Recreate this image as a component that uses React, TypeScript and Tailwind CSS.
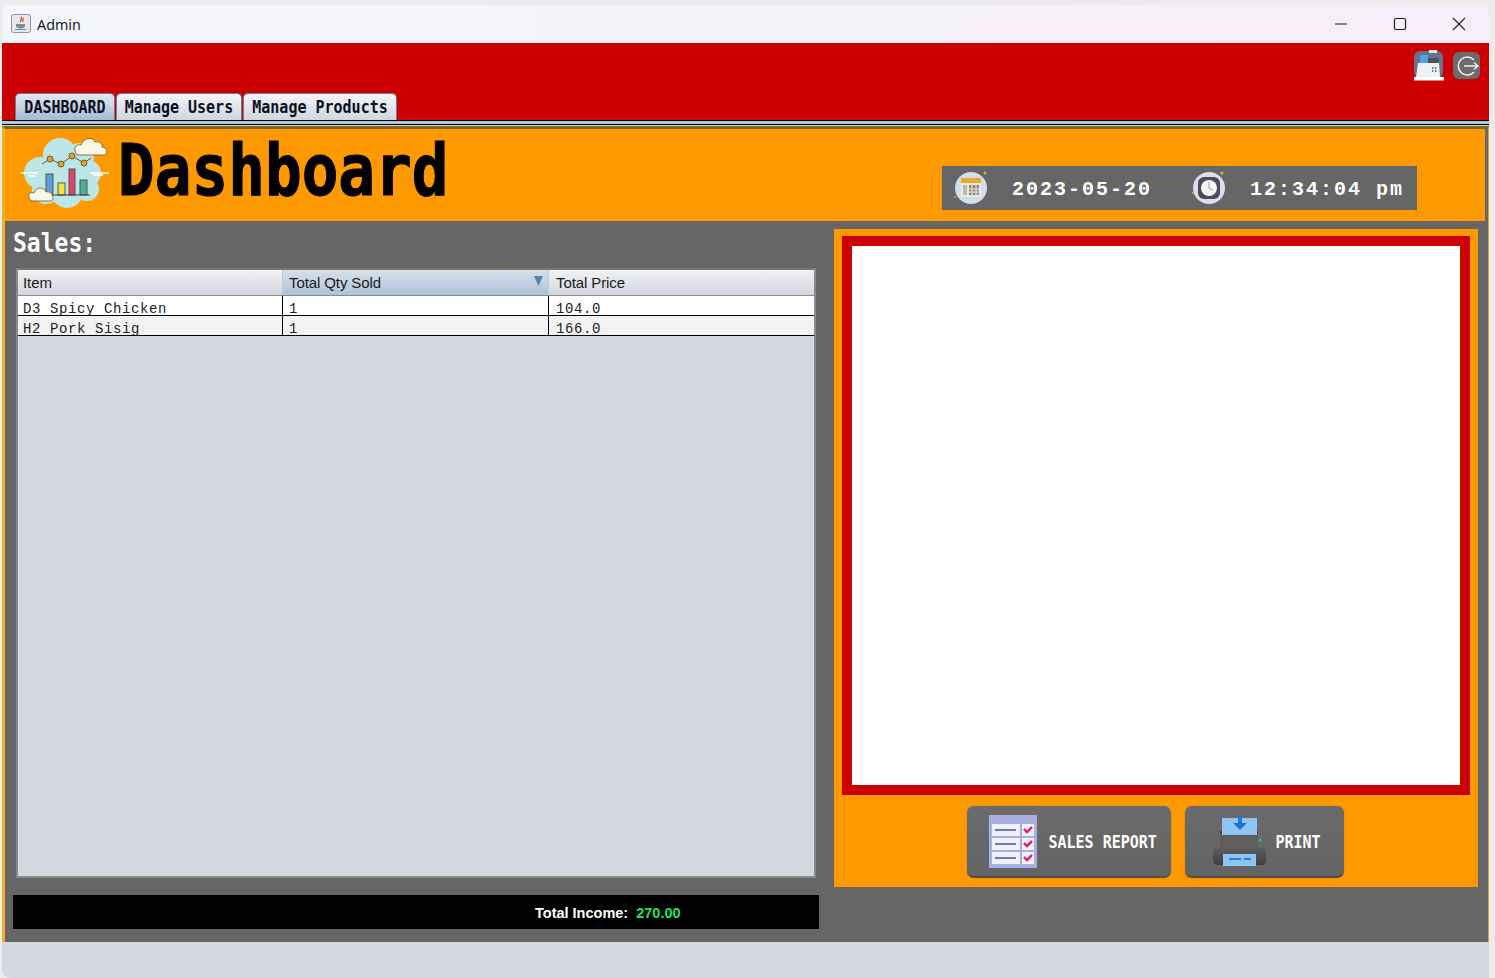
import React from 'react';

const sans = "font-['Liberation_Sans',Arial,sans-serif]";
const mono = "font-['Liberation_Mono','Courier_New',monospace]";
const square = "font-['DejaVu_Sans_Mono',monospace]";

const rows = [
    { item: 'D3 Spicy Chicken', qty: '1', price: '104.0', bg: 'bg-white' },
    { item: 'H2 Pork Sisig', qty: '1', price: '166.0', bg: 'bg-[#f2f2f2]' },
];

const JavaIcon = () => (
    <svg width="20" height="20" viewBox="0 0 20 20">
        <rect x="0.5" y="0.5" width="19" height="18" rx="2" fill="#e6e8ee" stroke="#8b93a5" />
        <path d="M10 3c2 2-2 3 0 5M12 4c1 2-1 2 0 4" stroke="#d9541e" strokeWidth="1.4" fill="none" />
        <path d="M5 10h9v1.500c0 2-2 3-4.500 3S5 13.500 5 11.500z" fill="#7b8aa5" />
        <path d="M4 15.500h11" stroke="#7b8aa5" strokeWidth="1.200" />
    </svg>
);

const CashRegister = () => (
    <svg width="32" height="31" viewBox="0 0 32 31">
        <rect x="2" y="1" width="29" height="27" rx="6" fill="#68738a" />
        <rect x="17" y="0" width="8" height="3" fill="#e6e8ee" />
        <path d="M8 5h8v9H8z" fill="#4ea3ea" />
        <path d="M6 13h10l1-1h10l1 15H4z" fill="#eef1f6" />
        <rect x="16" y="8" width="11" height="5" fill="#4a5364" />
        <path d="M20 18h1.500M23 18h1.500M20 21h1.500M23 21h1.500" stroke="#4a5364" strokeWidth="1.500" />
        <rect x="2" y="27" width="30" height="3.500" fill="#fff" />
    </svg>
);

const LogoutIcon = () => (
    <div className="flex h-[27px] w-[27px] items-center justify-center rounded-[6px] bg-[#6c6c6c]">
        <svg width="24" height="24" viewBox="0 0 24 24" fill="none" stroke="#f1f1f1" strokeWidth="1.500">
            <path d="M19 6a9 9 0 1 0 0 12" />
            <path d="M9 12h14M19 8.500 23 12l-4 3.500" />
        </svg>
    </div>
);

const SmallCloud = ({ d }: { d: string }) => <path d={d} fill="#fbf7e6" stroke="#6a5a30" strokeWidth="0.800" />;

const ChartCloud = () => (
    <svg width="90" height="76" viewBox="-2 0 90 76">
        <g fill="#bde6e6">
            <circle cx="38" cy="20" r="17" />
            <circle cx="58" cy="22" r="14" />
            <circle cx="18" cy="38" r="16" />
            <circle cx="66" cy="38" r="13" />
            <circle cx="24" cy="55" r="14" />
            <circle cx="45" cy="57" r="16" />
            <circle cx="65" cy="54" r="12" />
            <circle cx="45" cy="38" r="28" />
        </g>
        <path d="M-2 38h18M68 38h19M6 41h8M71 40h10" stroke="#fff" strokeWidth="1.300" />
        <path d="M20 29 28 24 39 29 50 21 62 28 69 23" stroke="#5a5a4a" strokeWidth="1" fill="none" />
        <circle cx="28" cy="24" r="3" fill="#e8a020" stroke="#6a5a30" />
        <circle cx="39" cy="29" r="3" fill="#e8a020" stroke="#6a5a30" />
        <circle cx="50" cy="21" r="3" fill="#e8a020" stroke="#6a5a30" />
        <circle cx="62" cy="28" r="3" fill="#e8a020" stroke="#6a5a30" />
        <rect x="24" y="39" width="7" height="21" fill="#5a9fdc" stroke="#555" />
        <rect x="36" y="48" width="7" height="12" fill="#f7e13a" stroke="#555" />
        <rect x="47" y="34" width="6" height="26" fill="#dd4468" stroke="#555" />
        <rect x="58" y="45" width="7" height="15" fill="#4fb08c" stroke="#555" />
        <path d="M22 60h46" stroke="#444" strokeWidth="1.200" />
        <SmallCloud d="M53 15c-1-4 3-6 6-5 2-7 12-9 14-3 5-1 8 2 7 5 5 0 7 8 1 8H57c-3 0-4-2-4-5z" />
        <SmallCloud d="M7 62c-1-4 2-5 5-4 1-6 10-7 12-1 4-1 7 2 6 4 2 2 1 5-2 5H11c-3 0-4-2-4-4z" />
    </svg>
);

const CalendarIcon = () => (
    <svg width="38" height="38" viewBox="0 0 38 38">
        <circle cx="19" cy="19" r="16" fill="#d3dcec" />
        <circle cx="33" cy="4" r="1.500" fill="#e0b030" />
        <circle cx="3" cy="28" r="1" fill="#e0b030" />
        <rect x="9" y="10" width="20" height="18" fill="#eeeadf" />
        <rect x="9" y="9" width="20" height="5" fill="#e6a92c" />
        <path d="M17 16h10v10H17z" fill="#8c8a84" />
        <path d="M11 16h4v10h-4z" fill="#bdb9ae" />
        <path d="M20 16v10M24 16v10M17 20h10M17 23h10" stroke="#eeeadf" />
    </svg>
);

const ClockIcon = () => (
    <svg width="38" height="38" viewBox="0 0 38 38">
        <circle cx="19" cy="19" r="16" fill="#dfdcef" />
        <circle cx="32" cy="4" r="1.500" fill="#e0b030" />
        <circle cx="3" cy="24" r="1" fill="#e0b030" />
        <rect x="8" y="8" width="22" height="22" rx="6" fill="#4c4c58" />
        <circle cx="19" cy="19" r="8" fill="#f6f6f6" />
        <path d="M19 13v6l4 2" stroke="#9a9aa2" strokeWidth="1" fill="none" />
    </svg>
);

const ChecklistIcon = () => (
    <svg width="48" height="53" viewBox="0 0 48 53">
        <rect width="48" height="53" fill="#a9aee0" />
        <rect x="3" y="9" width="28" height="12" fill="#eef0fa" />
        <rect x="3" y="23" width="28" height="12" fill="#eef0fa" />
        <rect x="3" y="37" width="28" height="12" fill="#eef0fa" />
        <rect x="33" y="9" width="12" height="12" fill="#eef0fa" />
        <rect x="33" y="23" width="12" height="12" fill="#eef0fa" />
        <rect x="33" y="37" width="12" height="12" fill="#eef0fa" />
        <path d="M6 15h21M6 29h21M6 43h21" stroke="#3f51a8" strokeWidth="1.600" />
        <path d="m35 14 3 3 5-5M35 28l3 3 5-5M35 42l3 3 5-5" stroke="#e5175f" strokeWidth="2.400" fill="none" />
    </svg>
);

const PrinterIcon = () => (
    <svg width="54" height="53" viewBox="0 0 54 53">
        <defs>
            <linearGradient id="printerBody" x1="0" y1="0" x2="0" y2="1">
                <stop offset="0" stopColor="#5e5e5e" />
                <stop offset="1" stopColor="#3f3f3f" />
            </linearGradient>
        </defs>
        <rect x="7" y="16" width="38" height="17" rx="2" fill="#5f5f5f" />
        <path d="M7 16h4v3H7zM41 16h4v3h-4z" fill="#3f3f3f" />
        <rect x="9" y="3" width="35" height="17" fill="#8ec5f5" />
        <path d="M27 0v10" stroke="#1976d2" strokeWidth="4" />
        <path d="m20 8 7 7 7-7z" fill="#1976d2" />
        <path d="M0 36c0-2 2-3 4-3h45c2 0 4 1 4 3v9c0 3-2 5-4 5H4c-2 0-4-2-4-5z" fill="url(#printerBody)" />
        <rect x="10" y="39" width="33" height="12" fill="#8ec5f5" />
        <path d="M16 44h12M31 44h7" stroke="#3a78c2" strokeWidth="2" />
        <circle cx="47" cy="25" r="1.500" fill="#43b58a" />
    </svg>
);

const WindowControls = () => (
    <div className="ml-auto flex items-center gap-[41px] pr-[21px]">
        <svg width="18" height="18" viewBox="0 0 18 18" stroke="#222" fill="none" strokeWidth="1">
            <path d="M3 9h12" />
        </svg>
        <svg width="18" height="18" viewBox="0 0 18 18" stroke="#222" fill="none" strokeWidth="1.200">
            <rect x="3.500" y="3.500" width="11" height="11" rx="1.500" />
        </svg>
        <svg width="18" height="18" viewBox="0 0 18 18" stroke="#222" fill="none" strokeWidth="1.100">
            <path d="m3 3 12 12M15 3 3 15" />
        </svg>
    </div>
);

const Tab = ({ label, active, width }: { label: string; active?: boolean; width: string }) => (
    <div
        className={`${width} flex h-[27px] items-center justify-center rounded-t-[5px] border border-b-0 border-[#6f7c8f] ${square} text-[15px] font-bold text-[#0a1020] ${
            active ? 'bg-gradient-to-b from-[#e3e9f0] to-[#a3bcd3]' : 'bg-gradient-to-b from-[#f4f5f8] to-[#d0d5df]'
        }`}
    >
        <span className="inline-block scale-y-[1.15]">{label}</span>
    </div>
);

const ActionButton = ({ width, icon, label, pl, gap }: { width: string; icon: React.ReactNode; label: string; pl: string; gap: string }) => (
    <button className={`${width} ${pl} ${gap} flex h-[72px] items-center rounded-[7px] border-b-2 border-[#55504a] bg-gradient-to-b from-[#6b6b6b] to-[#646464] shadow-[0_0_1px_#555] ${square} text-[15px] font-bold text-white`}>
        {icon}
        <span className="inline-block translate-y-[1px] scale-y-[1.15]">{label}</span>
    </button>
);

export default function App() {
    return (
        <div className="flex h-[978px] w-[1495px] flex-col overflow-hidden bg-[#ececec] pl-[2px] pr-[6px] pt-[5px]">
            <div className="flex h-[973px] flex-col overflow-hidden rounded-t-[8px] rounded-bl-[8px] bg-[#d5d8e0]">
                {/* Title bar */}
                <div className="flex h-[38px] shrink-0 items-center bg-gradient-to-r from-[#f4f6fb] to-[#f6eef8] pl-[9px]">
                    <JavaIcon />
                    <span className="ml-[6px] pt-[1px] font-['Noto_Sans',sans-serif] text-[14.300px] text-[#1a1a1a]">Admin</span>
                    <WindowControls />
                </div>

                {/* Red toolbar with tabs */}
                <div className="flex h-[77px] shrink-0 flex-col bg-[#cc0000]">
                    <div className="flex items-start justify-end gap-[9px] pr-[9px] pt-[7px]">
                        <CashRegister />
                        <div className="pt-[2px]">
                            <LogoutIcon />
                        </div>
                    </div>
                    <div className="mt-auto flex gap-[1px] pl-[13px]">
                        <Tab label="DASHBOARD" active width="w-[100px]" />
                        <Tab label="Manage Users" width="w-[126px]" />
                        <Tab label="Manage Products" width="w-[154px]" />
                    </div>
                </div>
                <div className="h-[5px] shrink-0 border-y border-black bg-[#b5c9dc]" />

                {/* Tab content */}
                <div className="mt-[1px] flex h-[816px] shrink-0 flex-col border-l-[3px] border-r border-t-[3px] border-l-[#f0b21c] border-r-[#d8a92a] border-t-[#7c6a22] bg-[#666666]">
                    <div className="mr-[3px] flex h-[92px] shrink-0 bg-[#ff9900] pl-[15px]">
                        <div className="pt-[6px]">
                            <ChartCloud />
                        </div>
                        <h1 className={`ml-[8px] mt-[2px] origin-center scale-y-[1.17] ${square} text-[61px] font-bold leading-[80px] text-black [-webkit-text-stroke:1px_black]`}>Dashboard</h1>
                        <div className="mb-[11px] ml-auto mr-[68px] flex h-[44px] w-[475px] items-center self-end bg-[#666666] pl-[10px]">
                            <CalendarIcon />
                            <span className={`ml-[22px] pt-[4px] ${mono} text-[20px] font-bold tracking-[2px] text-white`}>2023-05-20</span>
                            <span className="ml-[38px]">
                                <ClockIcon />
                            </span>
                            <span className={`ml-[22px] pt-[4px] ${mono} text-[20px] font-bold tracking-[2px] text-white whitespace-pre`}>12:34:04 pm</span>
                        </div>
                    </div>

                    <div className="flex min-h-0 flex-1 pl-[8px]">
                        {/* Sales column */}
                        <div className="flex w-[806px] shrink-0 flex-col">
                            <div className={`h-[47px] pt-[5px] ${square} text-[23px] font-bold leading-[34px] text-white`}>
                                <span className="inline-block scale-y-[1.12]">Sales:</span>
                            </div>
                            <div className="mx-[3px] flex h-[610px] flex-col border-2 border-[#8a8a8a] border-t-[#777] bg-[#d5d8e0]">
                                <div className={`grid h-[26px] grid-cols-[264px_266px_1fr] border-b border-[#8b8b8b] ${sans} text-[15px] tracking-[-0.1px] text-[#1a1a1a]`}>
                                    <div className="flex items-center bg-gradient-to-b from-[#f3f3f5] to-[#d2d5dc] pl-[5px] pt-[2px]">Item</div>
                                    <div className="flex items-center justify-between border-l border-[#c5c8d0] bg-gradient-to-b from-[#d8e0ea] to-[#aec4d9] pl-[6px] pr-[5px] pt-[2px]">
                                        <span>Total Qty Sold</span>
                                        <svg width="9" height="10" viewBox="0 0 9 10" className="mb-[5px]">
                                            <path d="M0 0h9L4.500 10z" fill="#5d83ab" />
                                        </svg>
                                    </div>
                                    <div className="flex items-center border-l border-[#c5c8d0] bg-gradient-to-b from-[#f3f3f5] to-[#d2d5dc] pl-[7px] pt-[2px]">Total Price</div>
                                </div>
                                {rows.map((row) => (
                                    <div key={row.item} className={`grid h-[20px] grid-cols-[264px_266px_1fr] overflow-hidden border-b border-black ${row.bg} ${mono} text-[14px] tracking-[0.6px] text-[#222]`}>
                                        <div className="whitespace-pre pl-[5px] pt-[5px] leading-[16px]">{row.item}</div>
                                        <div className="border-l border-black pl-[6px] pt-[5px] leading-[16px]">{row.qty}</div>
                                        <div className="border-l border-black pl-[7px] pt-[5px] leading-[16px]">{row.price}</div>
                                    </div>
                                ))}
                            </div>
                            <div className={`mt-[17px] flex h-[34px] items-center bg-black pl-[522px] pt-[3px] ${sans} text-[14.500px] font-bold`}>
                                <span className="text-white">Total Income:</span>
                                <span className="ml-[8px] text-[#22e060]">270.00</span>
                            </div>
                        </div>

                        {/* Receipt column */}
                        <div className="ml-[15px] mt-[8px] flex h-[658px] w-[644px] shrink-0 flex-col bg-[#ff9900] px-[8px] pt-[7px]">
                            <div className="h-[559px] shrink-0 border-[10px] border-[#cc0000] bg-white" />
                            <div className="mt-[11px] flex justify-center gap-[14px] pr-[2px]">
                                <ActionButton width="w-[204px]" pl="pl-[22px]" gap="gap-[12px]" icon={<ChecklistIcon />} label="SALES REPORT" />
                                <ActionButton width="w-[159px]" pl="pl-[28px]" gap="gap-[9px]" icon={<PrinterIcon />} label="PRINT" />
                            </div>
                        </div>
                    </div>
                </div>
            </div>
        </div>
    );
}
